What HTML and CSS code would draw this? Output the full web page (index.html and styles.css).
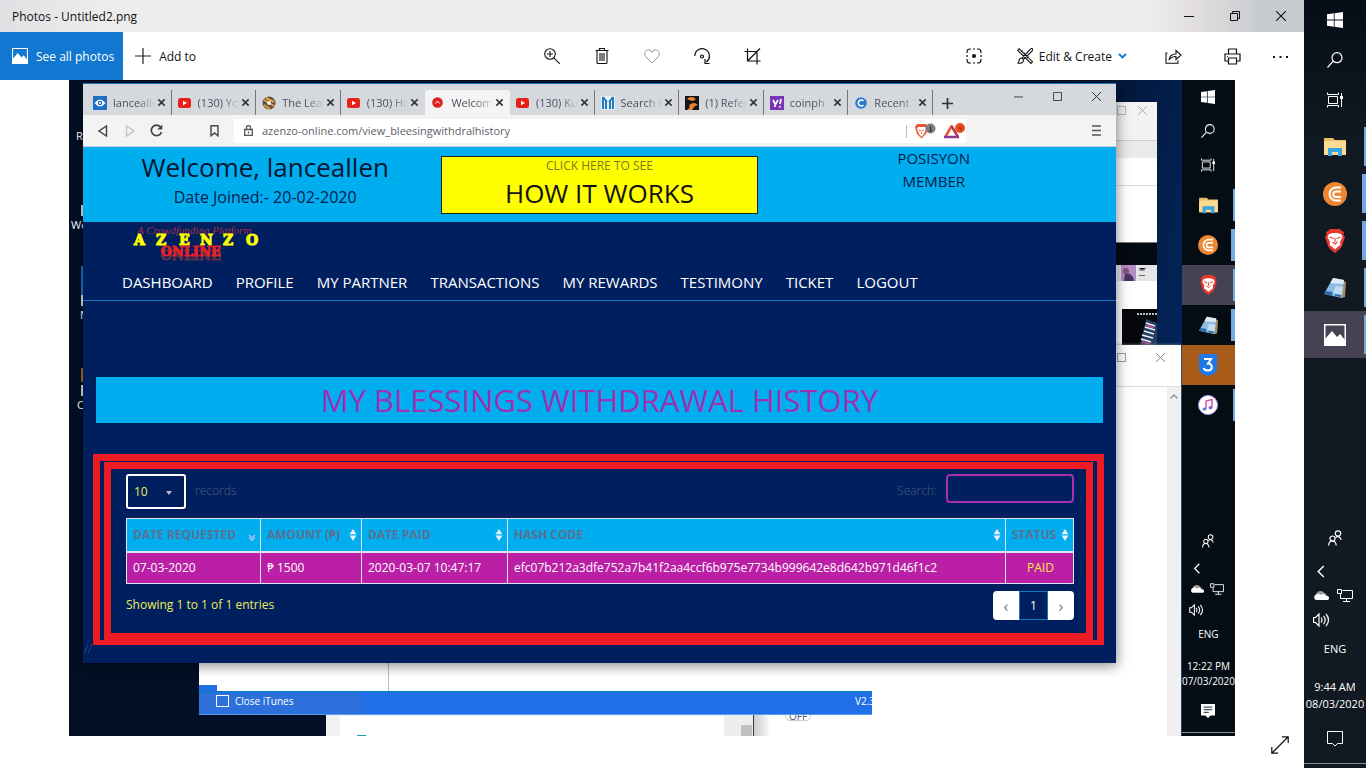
FILE: index.html
```html
<!DOCTYPE html>
<html lang="en">
<head>
    <meta charset="UTF-8">
    <title>Photos - Untitled2.png</title>
    <link rel="stylesheet" href="styles.css">
</head>
<body>

<!-- ===================== ICONS ===================== -->
<svg class="sprite" aria-hidden="true">
    <symbol id="i-windows" viewBox="0 0 16 16"><path fill="#fff" d="M0 2.3 6.8 1.3V7.6H0zM7.6 1.2 16 0V7.6H7.600zM0 8.400H6.800V14.700L0 13.700zM7.600 8.400H16V16L7.600 14.800z"/></symbol>
    <symbol id="i-search" viewBox="0 0 16 16"><g fill="none" stroke="#fff" stroke-width="1.200"><circle cx="10" cy="5.700" r="5"/><path d="M6.300 9.200.5 15.500"/></g></symbol>
    <symbol id="i-taskview" viewBox="0 0 16 16"><path fill="none" stroke="#fff" d="M1.500 4.500h9v7h-9zM.5.5v2h11v-2M.5 15.500v-2h11v2M14.500 1v14"/><path fill="#fff" d="M13 4h3v3h-3z"/></symbol>
    <symbol id="i-folder" viewBox="0 0 22 20"><path fill="#e9bd62" d="M0 1h9l2 2h11v15H0z"/><path fill="#fbdc92" d="M1 4h21v14H0V5z"/><path fill="#3aa6e0" d="M4 11h14v8h-4v-4H8v4H4z"/></symbol>
    <symbol id="i-coin" viewBox="0 0 24 24"><circle cx="12" cy="12" r="12" fill="#ee8732"/><path fill="none" stroke="#fff" stroke-width="2" d="M18 5.500h-5a6.500 6.500 0 0 0 0 13h5M18 9.500h-5a2.700 2.700 0 0 0 0 5.400h5"/></symbol>
    <symbol id="i-brave" viewBox="0 0 20 24"><path fill="#e8372b" d="M5 0h10l2 2 2 1-.5 3L20 8l-3 9-2 3-5 4-5-4-2-3L0 8l1.500-2L1 3l2-1z"/><path fill="#fff" d="M4 5l4-1h4l4 1 1.500 3-2.500 5 .5 3-3 2-2.500 2.500L7.500 18l-3-2 .5-3L2.500 8z"/><path fill="none" stroke="#e8372b" stroke-width="1.100" d="M4.500 8l4 1.500M15.500 8l-4 1.500M10 9v4M7.500 13l2.500 2 2.500-2"/></symbol>
    <symbol id="i-notes" viewBox="0 0 22 22"><path fill="#a98a62" d="M19 4l3 1-1 15-3 1z"/><path fill="#8fbce0" d="M9 1l11 2-2 18L0 17z"/><path fill="#dcebf6" d="M9 1l11 2-.500 4L6.500 6z"/><path fill="#c2dcf0" d="M12 9l7 1-1 8-9-2z"/><path fill="#2b6cab" d="M1.500 14l7 1v4L0 17zM11 17l6 1v2l-6-1z"/></symbol>
    <symbol id="i-photos" viewBox="0 0 22 22"><path fill="none" stroke="#fff" stroke-width="1.500" d="M.75.75h20.500v20.500H.75z"/><path fill="#fff" d="M1 15l7-8 5 6 3-3 5 6v5H1z"/></symbol>
    <symbol id="i-three" viewBox="0 0 18 22"><path fill="#1f78e6" d="M0 0h18v16l-3 4-6 2-6-2-3-4z"/><path fill="none" stroke="#fff" stroke-width="2" d="M5 5h7L9 9.500c5 0 5 7 0 7-2.500 0-4-1-4.300-2.500"/></symbol>
    <symbol id="i-itunes" viewBox="0 0 20 20"><circle cx="10" cy="10" r="9.500" fill="#fff" stroke="#b9a2ea"/><path fill="none" stroke="#d353a4" stroke-width="1.500" d="M8 13.500V6l6-1.500v8"/><ellipse cx="6.500" cy="14" rx="2" ry="1.600" fill="#4d84e8"/><ellipse cx="12.500" cy="12.700" rx="2" ry="1.600" fill="#8e5be0"/></symbol>
    <symbol id="i-people" viewBox="0 0 14 16"><g fill="none" stroke="#fff" stroke-width="1.200"><circle cx="10" cy="3.500" r="2.700"/><path d="M7.500 7.500c2-1.800 5.500-.7 5.500 2.500"/><circle cx="4.500" cy="8.500" r="2.500"/><path d="M.7 15.500c0-6 7.500-6 7.500 0"/></g></symbol>
    <symbol id="i-chevron" viewBox="0 0 8 14"><path fill="none" stroke="#fff" stroke-width="1.500" d="M7 1 1 7l6 6"/></symbol>
    <symbol id="i-cloud" viewBox="0 0 16 11"><path fill="#9b9fa3" d="M3 6a4.500 4 0 0 1 8-2.500L14 6 2 9z"/><path fill="#fff" d="M3 11a3 3 0 0 1 0-5.500c2-1 4-.5 5 .5 1.500-1.500 4-1 4.500.5C17 6.500 17 11 14 11z"/></symbol>
    <symbol id="i-monitor" viewBox="0 0 16 13"><path fill="none" stroke="#fff" d="M5.500 1.500h10v8H3.500V5M9.500 9.500v3M6 12.500h7M.5.500h4v4h-4z"/></symbol>
    <symbol id="i-sound" viewBox="0 0 17 14"><path fill="none" stroke="#fff" stroke-width="1.200" d="M.6 4.500h2L6 1v12L2.600 9.500h-2zM8 4.500q2 2.500 0 5M10.500 2.800q3.500 4.200 0 8.400M13 1q5 6 0 12"/></symbol>
    <symbol id="i-notify" viewBox="0 0 16 16"><path fill="none" stroke="#fff" d="M.5.5h15v12h-5L8 15l-2.500-2.500h-5z"/></symbol>
    <symbol id="i-notify-full" viewBox="0 0 16 16"><path fill="#fff" d="M0 0h16v13h-5l-3 3-3-3H0z"/><path stroke="#05101a" d="M3 3.500h10M3 6.500h10M3 9.500h6"/></symbol>
    <symbol id="i-min" viewBox="0 0 10 10"><path stroke="currentColor" d="M0 5.500h10"/></symbol>
    <symbol id="i-max" viewBox="0 0 10 10"><path fill="none" stroke="currentColor" d="M.5.500h9v9h-9z"/></symbol>
    <symbol id="i-restore" viewBox="0 0 10 10"><path fill="none" stroke="currentColor" d="M.5 2.500h7v7h-7zM2.500 2.500v-2h7v7h-2"/></symbol>
    <symbol id="i-close" viewBox="0 0 10 10"><path fill="none" stroke="currentColor" stroke-width="1.100" d="M0 0l10 10M10 0 0 10"/></symbol>
    <symbol id="i-tabclose" viewBox="0 0 10 10"><path stroke="#333" stroke-width="1.700" d="M1.500 1.500l7 7M8.500 1.500l-7 7"/></symbol>
    <symbol id="i-youtube" viewBox="0 0 14 14"><rect y="2" width="13" height="10" rx="2.500" fill="#e62117"/><path fill="#fff" d="M5 4.700 9 7 5 9.300z"/></symbol>
    <symbol id="i-sort" viewBox="0 0 8 12"><path fill="#e4eefa" d="M4 0l3.500 5.300h-7zM4 12L.5 6.500h7z"/></symbol>
</svg>

<div class="screen">
    <!-- ===================== PHOTOS APP ===================== -->
    <main class="photos">
        <header class="titlebar">
            <span>Photos - Untitled2.png</span>
            <div class="win-controls">
                <button aria-label="Minimize"><svg width="10" height="10"><use href="#i-min"/></svg></button>
                <button aria-label="Restore"><svg width="10" height="10"><use href="#i-restore"/></svg></button>
                <button aria-label="Close"><svg width="10" height="10"><use href="#i-close"/></svg></button>
            </div>
        </header>

        <div class="toolbar">
            <div class="tools">
                <button class="see-all"><svg width="16" height="16"><use href="#i-photos"/></svg>See all photos</button>
                <button class="add-to"><svg width="16" height="16" viewBox="0 0 16 16"><path stroke="#222" stroke-width="1.200" d="M8 0v16M0 8h16"/></svg>Add to</button>
            </div>
            <div class="tools tools-mid">
                <button aria-label="Zoom"><svg width="16" height="16" viewBox="0 0 16 16"><g fill="none" stroke="#111" stroke-width="1.100"><circle cx="6" cy="6" r="5.300"/><path d="M9.800 9.800l6 6M6 3v6M3 6h6"/></g></svg></button>
                <button aria-label="Delete"><svg width="14" height="16" viewBox="0 0 14 16"><path fill="none" stroke="#111" stroke-width="1.100" d="M.5 2.500h13M2 2.500v12q0 1 1 1h8q1 0 1-1v-12M4.500 2.500v-2h5v2M5 5v8M7 5v8M9 5v8"/></svg></button>
                <button aria-label="Favorite"><svg width="16" height="15" viewBox="0 0 16 15"><path fill="none" stroke="#999" d="M8 14 1.500 7.500C-1 4 2.500-.5 6 1.300Q7.500 2 8 3.500 8.500 2 10 1.300C13.500-.5 17 4 14.500 7.500z"/></svg></button>
                <button aria-label="Rotate"><svg width="17" height="17" viewBox="0 0 17 17"><g fill="none" stroke="#111" stroke-width="1.200"><path d="M.8 8a7.300 7.300 0 1 1 11.500 6M11 11v4.500h4.500"/><circle cx="8" cy="8.500" r="1.500"/></g></svg></button>
                <button aria-label="Crop"><svg width="17" height="17" viewBox="0 0 17 17"><path fill="none" stroke="#111" stroke-width="1.200" d="M3.500.5v12.500h13M.5 3.500H13v13M3.500 13 16 .5"/></svg></button>
            </div>
            <div class="tools tools-end">
                <button class="wide" aria-label="Visual search"><svg width="16" height="16" viewBox="0 0 16 16"><path fill="none" stroke="#111" stroke-width="1.200" d="M1 5V4q0-3 3-3h1M11 1h1q3 0 3 3v1M15 11v1q0 3-3 3h-1M5 15H4q-3 0-3-3v-1M7 1h2M7 15h2M1 7v2M15 7v2"/><circle cx="8" cy="8" r="2" fill="#111"/></svg></button>
                <button class="edit">
                    <svg width="16" height="16" viewBox="0 0 16 16"><path fill="none" stroke="#111" stroke-width="1.100" d="M2 .7l13.500 13-1.500 1.800L.7 2.500zM4 3.500l1.500-1M6.500 6 8 5M10 10l1.500-1.500M15.500.7q-1-.5-2 .5L5 10l1.500 1.500L15.200 3q1-1.200.3-2.300M5 10q-3 0-3 3-.3 1.800-1.500 2.200Q6.500 16 6.500 11.500"/></svg>
                    Edit &amp; Create
                    <svg width="9" height="6" viewBox="0 0 9 6"><path fill="none" stroke="#1177d1" stroke-width="1.800" d="M1 1l3.500 3.500L8 1"/></svg>
                </button>
                <button class="wide" aria-label="Share"><svg width="17" height="15" viewBox="0 0 17 15"><path fill="none" stroke="#111" stroke-width="1.100" d="M2.500 4H1v10.300h12v-3M4 11c.5-4 3-6 7-6V1.500L16 6l-5 4.500V7.500C8 7.500 6 8 4 11z"/></svg></button>
                <button aria-label="Print"><svg width="17" height="17" viewBox="0 0 17 17"><path fill="none" stroke="#111" stroke-width="1.200" d="M4.500 6V1h8v5M4 13H1V6h15v7h-3M4.500 10h8v6h-8zM3 8.500h1"/></svg></button>
                <button aria-label="See more"><svg width="15" height="3" viewBox="0 0 15 3"><path fill="#111" d="M0 1h2v2H0zM6.500 1h2v2h-2zM13 1h2v2h-2z"/></svg></button>
            </div>
        </div>

        <div class="photo">
            <div class="desktop">
                <span class="shortcut s1">Recycle</span>
                <span class="shortcut s2">Web</span>
                <span class="shortcut s3">Mail</span>
                <span class="shortcut s4">Coins</span>
                <i class="edge e1"></i><i class="edge e2"></i><i class="edge e3"></i><i class="edge e4"></i><i class="edge e5"></i>

                <!-- windows behind the browser -->
                <div class="window w-top">
                    <div class="w-top-bar">
                        <svg width="9" height="9"><use href="#i-max"/></svg>
                        <svg width="9" height="9"><use href="#i-close"/></svg>
                    </div>
                    <div class="w-top-tools"></div>
                    <div class="w-top-line"></div>
                </div>
                <div class="window w-feed">
                    <svg class="feed-head" width="40" height="16" viewBox="0 0 40 16"><path fill="#e4e5e7" d="M0 0h40v16H0z"/><path fill="#b58cbf" d="M4 0h15v16H4z"/><path fill="#473563" d="M7 16l1-8 5 1 3 3 1 4z"/><circle cx="9" cy="6" r="3" fill="#85527d"/><path stroke="#666" d="M22 3l3 2 4-2M22 5h6M22 10.500h6"/></svg>
                    <svg class="feed-pic" width="35" height="36" viewBox="0 0 35 36"><path fill="#06070b" d="M0 0h35v36H0z"/><path stroke="#bcc0c8" stroke-dasharray="2 1" stroke-width="2" d="M15 5h20"/><path fill="#273d62" d="M24 10l11 4v22H18z"/><path stroke="#e8f3ff" stroke-width="1.500" d="M24 14l9 3M23 18l10 3M22 22l10 3M20 26l11 3M19 30l10 3"/><path stroke="#cb488e" stroke-width="1.500" d="M24 16l8 3M20 33l8 2"/></svg>
                </div>
                <div class="window w-right">
                    <div class="w-right-bar">
                        <svg width="9" height="9"><use href="#i-max"/></svg>
                        <svg width="9" height="9"><use href="#i-close"/></svg>
                    </div>
                    <div class="w-right-scroll"><svg width="8" height="5" viewBox="0 0 8 5"><path fill="none" stroke="#999" stroke-width="1.500" d="M.5 4.500 4 1l3.500 3.500"/></svg></div>
                </div>
                <div class="window w-doc"><i class="doc-mark"></i><i class="doc-thumb"></i></div>
                <div class="window w-off"><span>OFF</span></div>
                <div class="window w-itunes">
                    <div class="itunes-pane"></div>
                    <div class="itunes-bar">
                        <label><input type="checkbox">Close iTunes</label>
                        <span>V2.3</span>
                    </div>
                </div>

                <!-- ===================== BROWSER ===================== -->
                <section class="window browser">
                    <div class="tabstrip">
                        <div class="tabs">
                            <div class="tab"><svg width="14" height="14" viewBox="0 0 14 14"><path fill="#1e6fc4" d="M0 0h14v14H0z"/><path fill="#fff" d="M1.500 7q5.500-7 11 0-5.500 7-11 0"/><circle cx="7" cy="7" r="2.300" fill="#1e6fc4"/><circle cx="7" cy="7" r="1" fill="#fff"/></svg><span>lanceallen</span><button aria-label="Close tab"><svg width="9" height="9"><use href="#i-tabclose"/></svg></button></div>
                            <div class="tab"><svg width="14" height="14"><use href="#i-youtube"/></svg><span>(130) YouTube</span><button aria-label="Close tab"><svg width="9" height="9"><use href="#i-tabclose"/></svg></button></div>
                            <div class="tab"><svg width="14" height="14" viewBox="0 0 14 14"><circle cx="7" cy="7" r="6.500" fill="#5b5042"/><path stroke="#eda23c" stroke-width="2" d="M2 4l10 6M4 2l8 4M2 9l6 4"/><circle cx="7" cy="7" r="2" fill="#eee"/></svg><span>The Leader</span><button aria-label="Close tab"><svg width="9" height="9"><use href="#i-tabclose"/></svg></button></div>
                            <div class="tab"><svg width="14" height="14"><use href="#i-youtube"/></svg><span>(130) How to</span><button aria-label="Close tab"><svg width="9" height="9"><use href="#i-tabclose"/></svg></button></div>
                            <div class="tab active"><svg width="14" height="14" viewBox="0 0 14 14"><circle cx="6.500" cy="6.500" r="5.300" fill="#dd2222"/><path fill="none" stroke="#fff" d="M4.500 7.500l2-2.500 2 2.500"/></svg><span>Welcome to</span><button aria-label="Close tab"><svg width="9" height="9"><use href="#i-tabclose"/></svg></button></div>
                            <div class="tab"><svg width="14" height="14"><use href="#i-youtube"/></svg><span>(130) Kung</span><button aria-label="Close tab"><svg width="9" height="9"><use href="#i-tabclose"/></svg></button></div>
                            <div class="tab"><svg width="14" height="14" viewBox="0 0 14 14"><path fill="#eaf4fb" d="M0 0h14v14H0z"/><path stroke="#267ab9" stroke-width="2" d="M2 1v12M5 4v9M9 4v9M12 1v12M2 1l4 5M12 1 8 6"/></svg><span>Search Results</span><button aria-label="Close tab"><svg width="9" height="9"><use href="#i-tabclose"/></svg></button></div>
                            <div class="tab"><svg width="14" height="14" viewBox="0 0 14 14"><path fill="#171313" d="M0 0h14v14H0z"/><path fill="#e98434" d="M2 3q4-4 9 0L8 5 4 4zM4 9q5-4 9 0l-3 1-3 4H2q4-3 2-5"/></svg><span>(1) Referral</span><button aria-label="Close tab"><svg width="9" height="9"><use href="#i-tabclose"/></svg></button></div>
                            <div class="tab"><svg width="14" height="14" viewBox="0 0 14 14"><path fill="#7b35b6" d="M0 0h14v14H0z"/><path fill="none" stroke="#fff" stroke-width="1.700" d="M3 4l2.500 4.500L8 4M5.500 8.500 4.500 11M11 3 10 8M9.800 10v1.500"/></svg><span>coinph - Yahoo</span><button aria-label="Close tab"><svg width="9" height="9"><use href="#i-tabclose"/></svg></button></div>
                            <div class="tab"><svg width="14" height="14" viewBox="0 0 14 14"><circle cx="7" cy="7" r="5.800" fill="#247bcf"/><path fill="none" stroke="#fff" stroke-width="1.500" d="M9.500 5a3 3 0 1 0 0 4"/></svg><span>Recent Trans</span><button aria-label="Close tab"><svg width="9" height="9"><use href="#i-tabclose"/></svg></button></div>
                        </div>
                        <button class="new-tab" aria-label="New tab"><svg width="11" height="11" viewBox="0 0 11 11"><path stroke="#333" stroke-width="1.700" d="M5.500 0v11M0 5.500h11"/></svg></button>
                        <div class="win-controls small">
                            <button aria-label="Minimize"><svg width="9" height="9"><use href="#i-min"/></svg></button>
                            <button aria-label="Maximize"><svg width="9" height="9"><use href="#i-max"/></svg></button>
                            <button aria-label="Close"><svg width="9" height="9"><use href="#i-close"/></svg></button>
                        </div>
                    </div>

                    <div class="addressbar">
                        <button aria-label="Back"><svg width="10" height="12" viewBox="0 0 10 12"><path fill="none" stroke="#444" stroke-width="1.400" d="M8.500 1v10L1 6z"/></svg></button>
                        <button aria-label="Forward"><svg width="10" height="12" viewBox="0 0 10 12"><path fill="none" stroke="#c4c4c4" stroke-width="1.400" d="M1.500 1v10L9 6z"/></svg></button>
                        <button aria-label="Reload"><svg width="13" height="13" viewBox="0 0 13 13"><path fill="none" stroke="#444" stroke-width="1.700" d="M11.500 8A5.200 5.200 0 1 1 10.500 3"/><path fill="#444" d="M12.300.5v5h-5z"/></svg></button>
                        <button class="bookmark" aria-label="Bookmark"><svg width="9" height="12" viewBox="0 0 9 12"><path fill="none" stroke="#444" stroke-width="1.400" d="M1 .8h7v10L4.500 8 1 10.800z"/></svg></button>
                        <div class="omnibox">
                            <svg width="9" height="11" viewBox="0 0 9 11"><path fill="none" stroke="#555" stroke-width="1.300" d="M.7 4.500h7.600v5.800H.7zM2.500 4.500v-2a2 2 0 0 1 4 0v2M4.500 6.500v2"/></svg>
                            <input type="text" aria-label="Address" value="azenzo-online.com/view_bleesingwithdralhistory">
                            <svg class="shields" width="60" height="16" viewBox="0 0 60 16"><path stroke="#bbb" d="M.5 2v13"/><path fill="#e8552f" d="M11 1h9l2 3-2 7-4.500 4.500L11 11 9 4z"/><path fill="#fff" d="M12 4h7l1 2-2 5-2.500 3-2.500-3-2-5z"/><path stroke="#e8552f" d="M13 7l2 1M18 7l-2 1M15.500 9v2"/><circle cx="24.500" cy="5.500" r="5" fill="#7b7d82"/><path stroke="#333" d="M24.500 3v5M23 8h3"/><path fill="none" stroke="#e8552f" stroke-width="2.500" d="M46 2.500l-6.500 11"/><path stroke="#8a3795" stroke-width="2.500" d="M38 14h15"/><path stroke="#b33b56" stroke-width="2.500" d="M45.500 3l6.500 11"/><circle cx="54" cy="5" r="5" fill="#e9501d"/><path fill="none" stroke="#a33310" d="M53 3v3h3M55 3v5"/></svg>
                        </div>
                        <button class="menu" aria-label="Menu"><svg width="9" height="11" viewBox="0 0 9 11"><path stroke="#555" stroke-width="1.400" d="M0 1h9M0 5.500h9M0 10h9"/></svg></button>
                    </div>

                    <div class="page">
                        <div class="welcome">
                            <div class="who">
                                <h1>Welcome, lanceallen</h1>
                                <p>Date Joined:- 20-02-2020</p>
                            </div>
                            <a class="how" href="#"><small>CLICK HERE TO SEE</small>HOW IT WORKS</a>
                            <div class="position">
                                <p>POSISYON</p>
                                <p>MEMBER</p>
                            </div>
                        </div>

                        <svg class="logo" width="130" height="34" viewBox="0 0 130 34" role="img" aria-label="Azenzo Online">
                            <text class="logo-tag" x="4" y="6">A Crowdfunding Platform</text>
                            <text class="logo-main" x="1 23 46 67 90 113" y="17">AZENZO</text>
                            <text class="logo-sub" x="28" y="28">ONLINE</text>
                        </svg>
                        <nav>
                            <a href="#">DASHBOARD</a>
                            <a href="#">PROFILE</a>
                            <a href="#">MY PARTNER</a>
                            <a href="#">TRANSACTIONS</a>
                            <a href="#">MY REWARDS</a>
                            <a href="#">TESTIMONY</a>
                            <a href="#">TICKET</a>
                            <a href="#">LOGOUT</a>
                        </nav>

                        <h2>MY BLESSINGS WITHDRAWAL HISTORY</h2>

                        <div class="frame">
                            <div class="records">
                                <div class="filters">
                                    <select id="length"><option>10</option></select>
                                    <label for="length">records</label>
                                    <label class="search-label" for="search">Search:</label>
                                    <input id="search" type="search">
                                </div>
                                <table>
                                    <thead>
                                        <tr>
                                            <th class="c-date"><div>DATE REQUESTED<svg class="sorted" width="8" height="8" viewBox="0 0 8 8"><path fill="none" stroke="#b6bdf0" stroke-width="1.200" d="M1 1l3 3 3-3M1 3.500l3 3 3-3"/></svg></div></th>
                                            <th class="c-amount"><div>AMOUNT (₱)<svg width="8" height="12"><use href="#i-sort"/></svg></div></th>
                                            <th class="c-paid"><div>DATE PAID<svg width="8" height="12"><use href="#i-sort"/></svg></div></th>
                                            <th><div>HASH CODE<svg width="8" height="12"><use href="#i-sort"/></svg></div></th>
                                            <th class="c-status"><div>STATUS<svg width="8" height="12"><use href="#i-sort"/></svg></div></th>
                                        </tr>
                                    </thead>
                                    <tbody>
                                        <tr>
                                            <td>07-03-2020</td>
                                            <td>₱ 1500</td>
                                            <td>2020-03-07 10:47:17</td>
                                            <td>efc07b212a3dfe752a7b41f2aa4ccf6b975e7734b999642e8d642b971d46f1c2</td>
                                            <td class="paid">PAID</td>
                                        </tr>
                                    </tbody>
                                </table>
                                <div class="table-foot">
                                    <span>Showing 1 to 1 of 1 entries</span>
                                    <div class="pager">
                                        <button aria-label="Previous">‹</button>
                                        <button class="current">1</button>
                                        <button aria-label="Next">›</button>
                                    </div>
                                </div>
                            </div>
                        </div>
                        <p class="slashes">//</p>
                    </div>
                </section>
            </div>

            <!-- taskbar inside the opened picture -->
            <aside class="taskbar taskbar-small">
                <button class="sys" aria-label="Start"><svg width="14" height="14"><use href="#i-windows"/></svg></button>
                <button class="sys" aria-label="Search"><svg width="14" height="14"><use href="#i-search"/></svg></button>
                <button class="sys" aria-label="Task view"><svg width="14" height="14"><use href="#i-taskview"/></svg></button>
                <div class="apps">
                    <button class="open" aria-label="Explorer"><svg width="19" height="17"><use href="#i-folder"/></svg></button>
                    <button class="open many" aria-label="CryptoTab"><svg width="20" height="20"><use href="#i-coin"/></svg></button>
                    <button class="open focus" aria-label="Brave"><svg width="17" height="20"><use href="#i-brave"/></svg></button>
                    <button class="open many" aria-label="Notes"><svg width="19" height="19"><use href="#i-notes"/></svg></button>
                    <button class="alert" aria-label="3uTools"><svg width="18" height="22"><use href="#i-three"/></svg></button>
                    <button class="open" aria-label="iTunes"><svg width="20" height="20"><use href="#i-itunes"/></svg></button>
                </div>
                <div class="tray">
                    <svg class="people" width="12" height="14"><use href="#i-people"/></svg>
                    <div class="tray-icons">
                        <svg width="14" height="11"><use href="#i-chevron"/></svg><i></i>
                        <svg width="14" height="10"><use href="#i-cloud"/></svg>
                        <svg width="14" height="12"><use href="#i-monitor"/></svg>
                        <svg width="15" height="12"><use href="#i-sound"/></svg>
                    </div>
                    <span class="lang">ENG</span>
                    <time>12:22 PM<br>07/03/2020</time>
                    <svg class="notify" width="14" height="14"><use href="#i-notify-full"/></svg>
                </div>
            </aside>
        </div>

        <footer class="photo-foot">
            <button aria-label="Full screen"><svg width="18" height="18" viewBox="0 0 18 18"><path fill="none" stroke="#111" stroke-width="1.200" d="M1 17 17 1M11 .8h6.200V7M.8 11v6.200H7"/></svg></button>
        </footer>
    </main>

    <!-- ===================== TASKBAR ===================== -->
    <aside class="taskbar">
        <button class="sys" aria-label="Start"><svg width="16" height="16"><use href="#i-windows"/></svg></button>
        <button class="sys" aria-label="Search"><svg width="16" height="16"><use href="#i-search"/></svg></button>
        <button class="sys" aria-label="Task view"><svg width="16" height="16"><use href="#i-taskview"/></svg></button>
        <div class="apps">
            <button class="open" aria-label="Explorer"><svg width="22" height="20"><use href="#i-folder"/></svg></button>
            <button class="open many" aria-label="CryptoTab"><svg width="24" height="24"><use href="#i-coin"/></svg></button>
            <button class="open many" aria-label="Brave"><svg width="20" height="24"><use href="#i-brave"/></svg></button>
            <button class="open" aria-label="Notes"><svg width="22" height="22"><use href="#i-notes"/></svg></button>
            <button class="open focus" aria-label="Photos"><svg width="22" height="22"><use href="#i-photos"/></svg></button>
        </div>
        <div class="tray">
            <svg class="people" width="14" height="16"><use href="#i-people"/></svg>
            <div class="tray-icons">
                <svg width="16" height="13"><use href="#i-chevron"/></svg><i></i>
                <svg width="16" height="11"><use href="#i-cloud"/></svg>
                <svg width="16" height="13"><use href="#i-monitor"/></svg>
                <svg width="17" height="14"><use href="#i-sound"/></svg>
            </div>
            <span class="lang">ENG</span>
            <time>9:44 AM<br>08/03/2020</time>
            <svg class="notify" width="16" height="16"><use href="#i-notify"/></svg>
        </div>
    </aside>
</div>

</body>
</html>
```
FILE: styles.css
```css
* { box-sizing: border-box; }
body { margin: 0; font-family: "Open Sans", "Noto Sans", sans-serif; font-size: 12px; color: #111; }
h1, h2, p { margin: 0; font-weight: 400; }
button { border: 0; padding: 0; background: none; font: inherit; color: inherit; display: flex; align-items: center; justify-content: center; white-space: nowrap; }
svg { flex: none; display: block; }
a { text-decoration: none; }
.sprite { position: absolute; width: 0; height: 0; }

.screen { display: flex; height: 100vh; overflow: hidden; }

/* ---------- Photos app ---------- */
.photos { flex: 1; min-width: 0; display: flex; flex-direction: column; background: #fff; }
.titlebar {
    display: flex;
    align-items: center;
    justify-content: space-between;
    height: 32px;
    padding-left: 12px;
    background: linear-gradient(90deg, #dfe0e3, #ededed 8%, #ededed 88%, #e0dcdf 92%, #c6cacd 97%, #c6cacd);
}
.win-controls { display: flex; align-self: stretch; }
.win-controls button { width: 46px; }
.win-controls.small { margin-left: auto; height: 24px; }
.win-controls.small button { width: 39px; color: #333; }

.toolbar { display: grid; grid-template-columns: 1fr auto 1fr; height: 48px; }
.tools { display: flex; }
.tools button { width: 48px; }
.tools-mid button { width: 50px; }
.tools-end { justify-content: flex-end; }
.tools .see-all { width: auto; padding: 0 9px 0 12px; gap: 8px; background: #1177d1; color: #fff; }
.tools .add-to { width: auto; padding: 0 12px; gap: 8px; }
.tools .edit { width: auto; padding: 0 11px 0 8px; gap: 6px; }
.tools .wide { width: 70px; }

.photo { flex: 1; min-height: 0; margin: 0 69px; display: flex; }
.photo-foot { height: 32px; padding-right: 15px; display: flex; justify-content: flex-end; align-items: flex-start; }

/* ---------- Desktop and its windows ---------- */
.desktop {
    position: relative;
    flex: 1;
    min-width: 0;
    overflow: hidden;
    background: linear-gradient(100deg, #020f25 0, #020f25 80%, #032760 96%, #01173c);
}
.shortcut { position: absolute; color: #fff; font-size: 11px; line-height: 14px; }
.s1 { left: 7px; top: 49px; }
.s2 { left: 2px; top: 138px; }
.s3 { left: 11px; top: 228px; }
.s4 { left: 8px; top: 318px; }
.edge { position: absolute; left: 12px; width: 2px; height: 11px; background: #ddd; }
.e1 { top: 125px; }
.e2 { top: 186px; height: 29px; background: #1b72c0; }
.e3 { top: 215px; }
.e4 { top: 305px; }
.e5 { top: 288px; height: 14px; background: #a4691f; }

.window { position: absolute; background: #fff; overflow: hidden; }
.w-top { top: 22px; right: 25px; width: 120px; height: 141px; border-bottom: 1px solid #777; }
.w-top-bar { display: flex; justify-content: flex-end; gap: 12px; height: 39px; padding: 4px 10px; background: #f2f2f2; color: #aaa; border-bottom: 1px solid #ccc; }
.w-top-tools { height: 17px; background: #eaeaea; }
.w-top-line { height: 28px; border-bottom: 1px solid #ddd; }
.w-feed { top: 163px; right: 25px; width: 120px; height: 102px; border-top: 22px solid #040a12; }
.feed-head { margin-left: auto; }
.feed-pic { margin: 28px 0 0 auto; }
.w-right { top: 265px; right: 1px; bottom: 0; width: 309px; box-shadow: 0 0 3px #888; }
.w-right-bar { display: flex; justify-content: flex-end; gap: 30px; height: 42px; padding: 8px 16px; color: #888; border-bottom: 1px solid #ddd; }
.w-right-scroll { margin-left: auto; width: 14px; height: 100%; padding: 7px 3px; background: #f0f0f0; }
.w-doc { left: 257px; bottom: 0; width: 430px; height: 24px; border: solid #f1f1f1; border-width: 4px 0 0 14px; background: linear-gradient(90deg, #fff 384px, #eee 384px); }
.doc-mark { position: absolute; left: 17px; bottom: 0; width: 9px; height: 1px; background: #19a0b5; }
.doc-thumb { position: absolute; right: 4px; bottom: 0; width: 11px; height: 11px; background: #c0c2c2; }
.w-off { left: 684px; bottom: 0; width: 119px; height: 24px; border-left: 1px solid #334; background: linear-gradient(90deg, #ccc, #f4f4f4 14px, #fff 15px); }
.w-off span { display: block; width: 26px; margin: -1px 0 0 31px; border: 1px solid #ccc; border-radius: 10px; color: #557; font-size: 10px; line-height: 8px; text-align: center; }
.w-itunes { left: 130px; bottom: 21px; width: 673px; height: 60px; padding-top: 36px; background: linear-gradient(#fff 30px, #216fe3 30px); }
.itunes-pane { position: absolute; left: 18px; top: 0; right: 0; height: 36px; background: linear-gradient(90deg, transparent 171px, #bbb 171px, #bbb 172px, transparent 172px) #fff; }
.itunes-bar { display: flex; align-items: center; justify-content: space-between; height: 24px; padding-left: 17px; background: linear-gradient(90deg, #2d70dc 161px, #216fe8 161px); border-top: 2px solid #1177d1; border-bottom: 1px solid #5c9cf0; color: #fff; font-size: 10px; line-height: 16px; white-space: nowrap; }
.itunes-bar label { display: flex; align-items: center; gap: 6px; padding-bottom: 5px; }
.itunes-bar input { appearance: none; width: 13px; height: 12px; margin: 0; border: 1px solid #fff; }
.itunes-bar span { width: 17px; overflow: hidden; padding-bottom: 5px; }

/* ---------- Browser ---------- */
.browser { top: 3px; left: 14px; right: 66px; bottom: 73px; display: flex; flex-direction: column; border-top: 1px solid #1474b8; box-shadow: 1px 3px 12px rgba(0, 0, 0, 0.45); }
.tabstrip { display: flex; height: 31px; background: #d5d8dd; }
.tabs { flex: 0 1 850px; min-width: 0; display: flex; padding: 6px 0 0 4px; }
.tab { flex: 1 1 0; min-width: 0; display: flex; align-items: center; gap: 6px; padding: 0 5px 0 6px; border-right: 1px solid #777; font-size: 11px; color: #4d5060; }
.tab span { flex: 1; min-width: 0; margin-right: -4px; overflow: hidden; white-space: nowrap; -webkit-mask-image: linear-gradient(90deg, #000 60%, transparent); mask-image: linear-gradient(90deg, #000 60%, transparent); }
.tab:has(+ .active) { border-right-color: transparent; }
.tab.active { background: #f4f4f5; border-radius: 3px 3px 0 0; border-right-color: transparent; }
.new-tab { width: 28px; padding-top: 8px; }

.addressbar { display: flex; align-items: center; height: 32px; padding-left: 6px; background: #f3f3f4; border-bottom: 1px solid #ccd; }
.addressbar button { width: 27px; }
.addressbar .bookmark { margin-left: 31px; }
.addressbar .menu { margin-left: auto; width: 38px; }
.omnibox { flex: 0 1 732px; display: flex; align-items: center; gap: 9px; height: 24px; margin-left: 6px; padding-left: 10px; background: #fff; border-radius: 3px; }
.omnibox input { flex: 1; min-width: 0; border: 0; padding: 0; font: 11px "Open Sans", sans-serif; color: #5d6168; outline: 0; }

/* ---------- Page ---------- */
.page { flex: 1; display: flex; flex-direction: column; background: #001f5f; }
.welcome { display: grid; grid-template-columns: repeat(3, 1fr); height: 75px; padding: 0 15px; background: #00aeef; color: #001a4a; text-align: center; }
.who h1 { font-size: 26px; line-height: 40px; color: #041530; }
.who p { font-size: 16px; line-height: 20px; }
.how { display: flex; flex-direction: column; height: 58px; margin: 9px 9px 8px; background: #ff0; border: 1px solid #222; color: #111; font-size: 26px; line-height: 36px; }
.how small { font-size: 12px; line-height: 18px; color: #7a7a20; }
.position { font-size: 15px; line-height: 23px; }

.logo { margin: 6px 0 0 50px; overflow: visible; }
.logo text { font-family: "DejaVu Serif", serif; font-weight: 700; }
.logo .logo-tag { font-family: "Liberation Serif", serif; font-size: 11px; font-style: italic; font-weight: 400; fill: #a03048; }
.logo .logo-main { font-size: 14px; fill: #ff0; stroke: #ff0; stroke-width: 1px; }
.logo .logo-sub { font-size: 13px; fill: #e8202a; stroke: #e8202a; stroke-width: 1px; filter: drop-shadow(0 4px 0 #5a3048); }

nav { display: flex; gap: 23px; height: 39px; padding: 10px 39px; border-bottom: 1px solid #0f76c0; }
nav a { color: #fff; font-size: 15px; line-height: 21px; white-space: nowrap; }
.page h2 { margin: 76px 13px 0; background: #00aeef; color: #9a32b4; font-size: 31px; line-height: 46px; text-align: center; }

.frame { margin: 31px 12px 0 10px; border: 7px solid #ed1c24; border-bottom-width: 5px; padding: 1px 4px 0; background: #001f5f; }
.records { border: 7px solid #ed1c24; padding: 5px 12px 13px 15px; color: #ecec5a; }
.filters { display: flex; align-items: flex-start; height: 44px; }
.filters label { color: #4a5f78; font-weight: 300; line-height: 34px; padding-left: 9px; }
.filters .search-label { margin-left: auto; padding-right: 9px; }
.filters select {
    appearance: none;
    width: 60px;
    height: 35px;
    padding: 0 6px;
    border: 2px solid #fff;
    border-radius: 3px;
    background: url("data:image/svg+xml,%3Csvg xmlns='http://www.w3.org/2000/svg' width='6' height='4'%3E%3Cpath d='M0 0h6L3 4z' fill='%23bbc'/%3E%3C/svg%3E") no-repeat 38px 15px #001f5f;
    color: #ecec5a;
    font: 12px "Open Sans", sans-serif;
}
.filters input { appearance: none; width: 128px; height: 29px; border: 2px solid #a82fb0; border-radius: 4px; background: #001f5f; color: #fff; }

table { width: 100%; border-collapse: collapse; table-layout: fixed; }
th, td { height: 33px; padding: 0 4px 0 6px; border: 1px solid #dce6f5; text-align: left; white-space: nowrap; }
th { background: #00aeef; color: #5c7192; font-weight: 700; border-bottom-width: 2px; }
th div { display: flex; align-items: center; justify-content: space-between; }
.sorted { margin-top: 6px; }
td { height: 32px; background: #ba1fa6; color: #fff; }
td.paid { color: #ffe24a; text-align: center; }
.c-date { width: 134px; }
.c-amount { width: 101px; }
.c-paid { width: 146px; }
.c-status { width: 68px; }
.table-foot { display: flex; justify-content: space-between; padding-top: 7px; line-height: 28px; }
.pager { display: flex; height: 29px; border-radius: 4px; overflow: hidden; background: #fff; color: #777; }
.pager button { width: 26px; font-size: 16px; }
.pager .current { width: 29px; background: #001f5f; border: 1px solid #0f76c0; color: #fff; font-size: 12px; }
.slashes { padding-left: 1px; color: #4a5d86; font-size: 12px; font-weight: 300; line-height: 8px; }

/* ---------- Taskbars ---------- */
.taskbar { flex: 0 0 62px; display: flex; flex-direction: column; background: #101820 linear-gradient(#050d16, #111a22 20%); color: #fff; }
.taskbar button { width: 100%; }
.sys { height: 40px; }
.apps { padding-top: 3px; }
.apps button { height: 47px; border: solid transparent; border-width: 4px 2px; }
.apps .open { border-image: linear-gradient(90deg, transparent 50%, #76a9e0 50%) 0 2 0 0; }
.apps .many { border-width: 4px; }
.apps .focus { background: #454353; }
.apps .alert { background: #a85a18; }
.tray { margin-top: auto; display: flex; flex-direction: column; align-items: center; border-bottom: 1px solid #8a8f94; margin-bottom: 4px; font-size: 11px; line-height: 17px; text-align: center; }
.tray-icons { display: grid; grid-template-columns: 17px 16px; gap: 11px 7px; justify-items: center; padding: 19px 5px 0 0; }
.tray .lang { padding-top: 13px; }
.tray time { padding: 21px 0 19px; }
.tray .notify { margin-bottom: 16px; }

.taskbar-small { flex-basis: 53px; background: #040c14; }
.taskbar-small .sys { height: 34px; }
.taskbar-small .apps { padding-top: 3px; }
.taskbar-small .apps button { height: 40px; }
.taskbar-small .tray { margin-bottom: 3px; font-size: 10px; line-height: 15px; }
.taskbar-small .tray-icons { grid-template-columns: 15px 14px; gap: 9px 6px; padding: 15px 3px 0 0; }
.taskbar-small .lang { padding-top: 11px; }
.taskbar-small time { padding: 17px 0 15px; }
.taskbar-small .notify { margin-bottom: 14px; }
```
